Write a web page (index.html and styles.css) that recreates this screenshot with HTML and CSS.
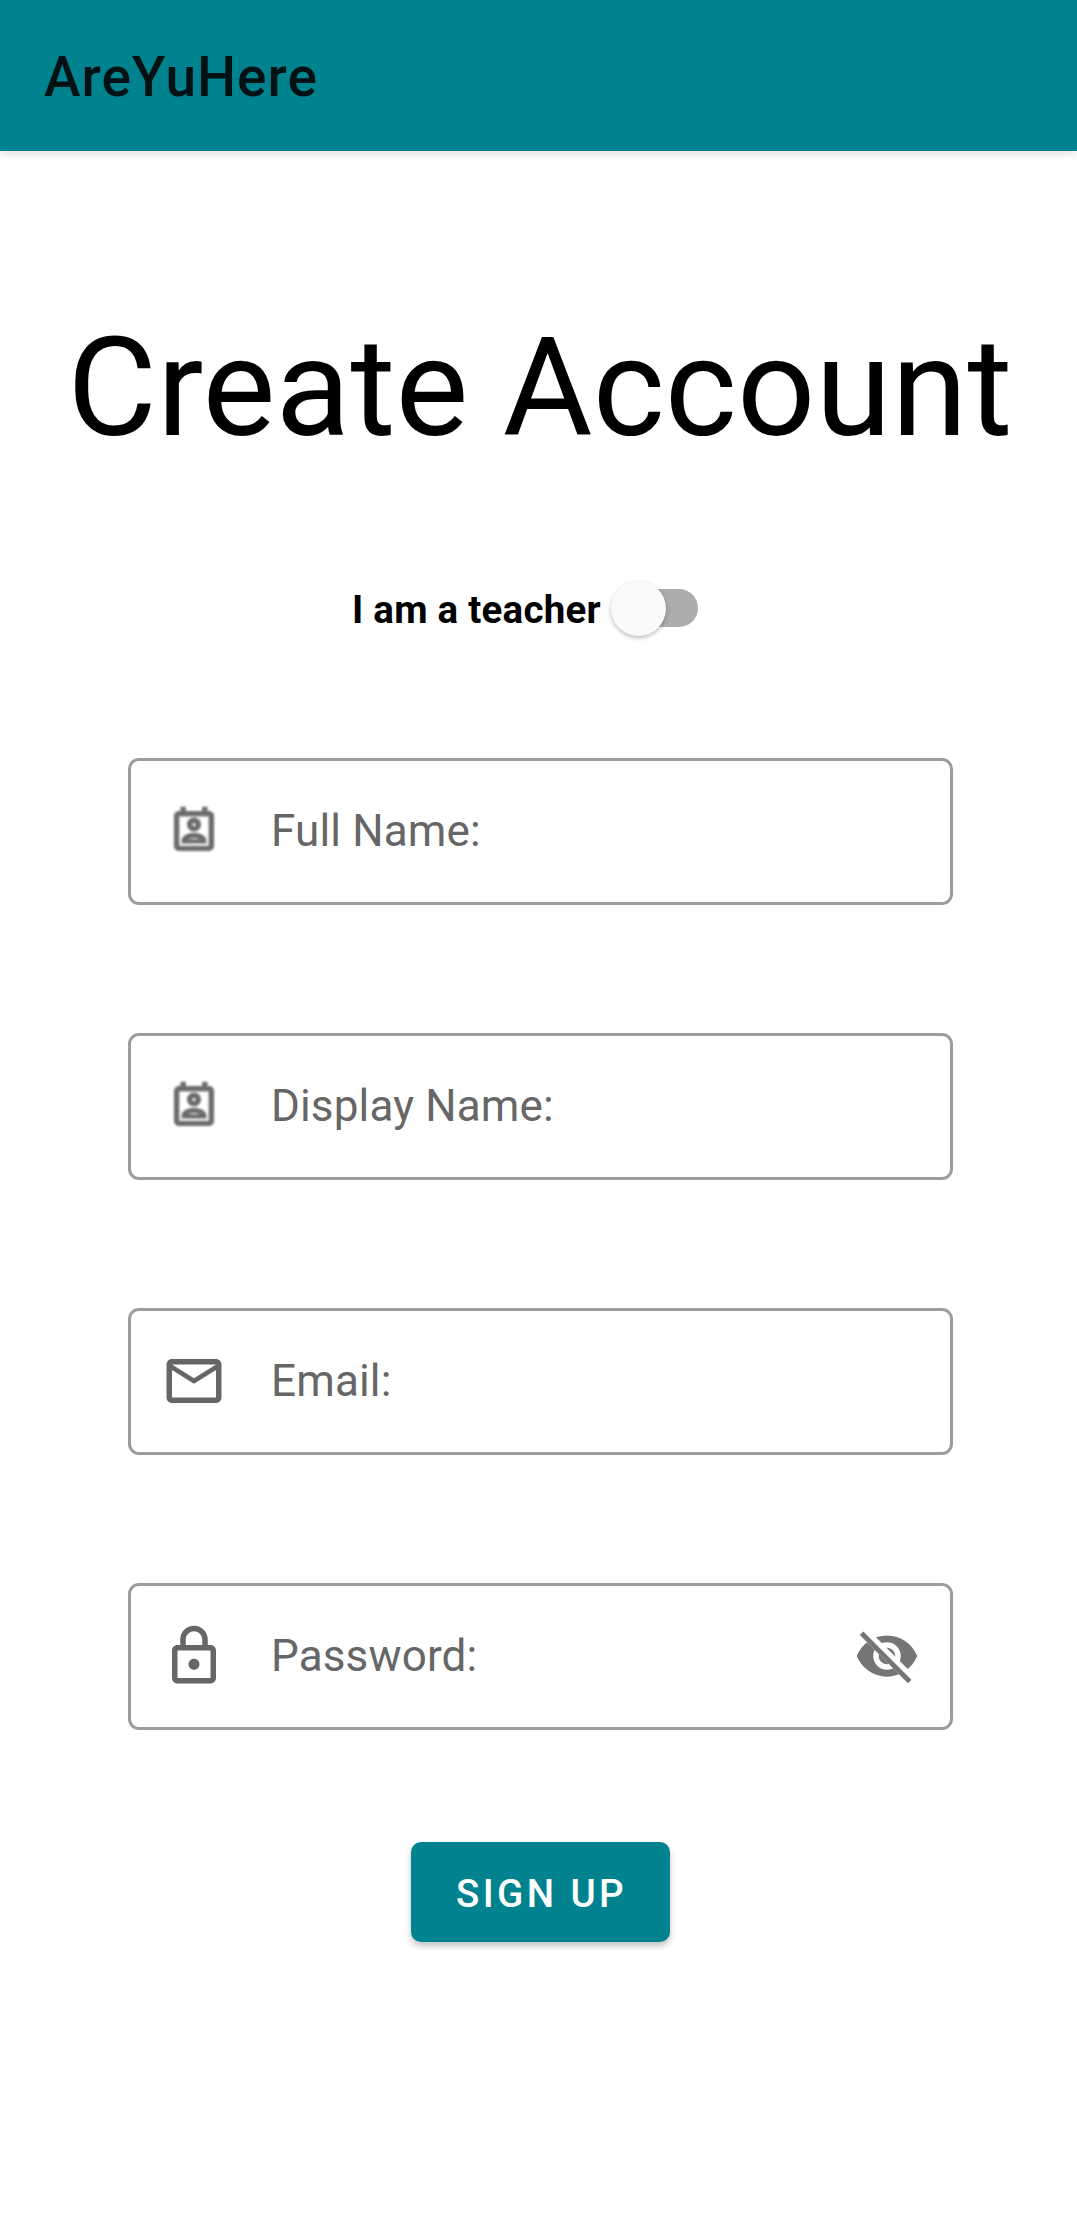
FILE: index.html
```html
<!DOCTYPE html>
<html lang="en">
<head>
<meta charset="utf-8">
<title>AreYuHere</title>
<link rel="stylesheet" href="styles.css">
</head>
<body>
<header class="app-bar"><span class="app-name">AreYuHere</span></header>
<main class="signup">
  <h1 class="title">Create Account</h1>
  <div class="teacher">
    <span class="teacher-label">I am a teacher</span>
    <span class="switch"><span class="thumb"></span></span>
  </div>
  <form class="fields">
    <label class="field">
      <svg class="icon icon-contact" viewBox="0 0 24 24"><path d="M19 3h-1V1h-2v2H8V1H6v2H5a2 2 0 0 0-2 2v14c0 1.1.89 2 2 2h14c1.1 0 2-.9 2-2V5a2 2 0 0 0-2-2zm0 16H5V5h14v14zM12 12c1.65 0 3-1.35 3-3s-1.35-3-3-3-3 1.35-3 3 1.35 3 3 3zm0-4c.55 0 1 .45 1 1s-.45 1-1 1-1-.45-1-1 .45-1 1-1zm5.5 8.58c0-2.5-3.5-3.58-5.5-3.58s-5.5 1.08-5.5 3.58V17.5h11v-.92zM8.48 16c.74-.51 2.23-1 3.52-1s2.78.49 3.52 1H8.48z"/></svg>
      <span class="hint">Full Name:</span>
    </label>
    <label class="field">
      <svg class="icon icon-contact" viewBox="0 0 24 24"><path d="M19 3h-1V1h-2v2H8V1H6v2H5a2 2 0 0 0-2 2v14c0 1.1.89 2 2 2h14c1.1 0 2-.9 2-2V5a2 2 0 0 0-2-2zm0 16H5V5h14v14zM12 12c1.65 0 3-1.35 3-3s-1.35-3-3-3-3 1.35-3 3 1.35 3 3 3zm0-4c.55 0 1 .45 1 1s-.45 1-1 1-1-.45-1-1 .45-1 1-1zm5.5 8.58c0-2.5-3.5-3.58-5.5-3.58s-5.5 1.08-5.5 3.58V17.5h11v-.92zM8.48 16c.74-.51 2.23-1 3.52-1s2.78.49 3.52 1H8.48z"/></svg>
      <span class="hint">Display Name:</span>
    </label>
    <label class="field">
      <svg class="icon" viewBox="0 0 24 24"><path d="M22 6c0-1.1-.9-2-2-2H4c-1.1 0-2 .9-2 2v12c0 1.1.9 2 2 2h16c1.1 0 2-.9 2-2V6zm-2 0l-8 5-8-5h16zm0 12H4V8l8 5 8-5v10z"/></svg>
      <span class="hint">Email:</span>
    </label>
    <label class="field">
      <svg class="icon" viewBox="0 0 24 24"><path d="M18 8h-1V6c0-2.76-2.24-5-5-5S7 3.24 7 6v2H6c-1.1 0-2 .9-2 2v10c0 1.1.9 2 2 2h12c1.1 0 2-.9 2-2V10c0-1.1-.9-2-2-2zM9 6c0-1.66 1.34-3 3-3s3 1.34 3 3v2H9V6zm9 14H6V10h12v10zm-6-3c1.1 0 2-.9 2-2s-.9-2-2-2-2 .9-2 2 .9 2 2 2z"/></svg>
      <span class="hint">Password:</span>
      <svg class="icon icon-eye" viewBox="0 0 24 24">
        <clipPath id="strike"><path d="M2 4.27L19.73 22l2.54-2.54L4.54 1.73V1H23v22H1V4.27z"/></clipPath>
        <path clip-path="url(#strike)" d="M12 4.5C7 4.5 2.73 7.61 1 12c1.73 4.39 6 7.5 11 7.5s9.27-3.11 11-7.5c-1.73-4.39-6-7.5-11-7.5zM12 17c-2.76 0-5-2.24-5-5s2.24-5 5-5 5 2.24 5 5-2.24 5-5 5zm0-8c-1.66 0-3 1.34-3 3s1.34 3 3 3 3-1.34 3-3-1.34-3-3-3z"/>
        <path class="slash" d="M2.75 3.75l17.5 17.5"/>
      </svg>
    </label>
    <button class="submit" type="button">SIGN UP</button>
  </form>
</main>
</body>
</html>
```
FILE: styles.css
```css
* {
  box-sizing: border-box;
}

body {
  margin: 0;
  min-height: 2240px;
  background: #fff;
  color: #000;
  font-family: Roboto, "Liberation Sans", sans-serif;
}

.app-bar {
  display: flex;
  align-items: center;
  height: 151px;
  padding: 3px 44px 0;
  background: #00838f;
  box-shadow: 0 3px 8px rgba(0, 0, 0, 0.12);
}

.app-name {
  font-size: 55px;
  font-weight: 500;
  letter-spacing: 1px;
  color: #021214;
}

.signup {
  display: flex;
  flex-direction: column;
  align-items: center;
}

.title {
  margin: 157px 0 0;
  padding-left: 3px;
  font-size: 137.5px;
  line-height: 161px;
  font-weight: 400;
  letter-spacing: 0.15px;
  white-space: nowrap;
}

.teacher {
  display: flex;
  align-items: center;
  gap: 10px;
  height: 58px;
  margin: 110px 0 0;
  padding-right: 27px;
}

.teacher-label {
  padding-top: 3px;
  font-size: 38.5px;
  font-weight: 700;
  letter-spacing: 0.25px;
  white-space: nowrap;
}

.switch {
  display: flex;
  align-items: center;
  width: 87px;
  height: 38px;
  border-radius: 19px;
  background: linear-gradient(to right, transparent 30px, #acacac 30px);
}

.thumb {
  width: 55px;
  height: 55px;
  border-radius: 50%;
  background: #fafafa;
  box-shadow: 0 2px 4px rgba(0, 0, 0, 0.26);
}

.fields {
  display: flex;
  flex-direction: column;
  align-items: center;
  gap: 128px;
  width: 825px;
  margin: 121px 0 0 4px;
}

.field {
  display: flex;
  align-items: center;
  width: 100%;
  height: 147px;
  padding: 0 30px 2px;
  border: 3px solid #9c9c9c;
  border-radius: 11px;
}

.icon {
  flex: none;
  width: 66px;
  height: 66px;
  fill: #666;
}

.icon-contact {
  width: 52px;
  height: 52px;
  margin: 1px 7px 0;
  fill: #6c6c6c;
  stroke: #6c6c6c;
  stroke-width: 0.5;
  filter: blur(0.9px);
}

.icon-eye {
  margin-left: auto;
  fill: #757575;
}

.slash {
  fill: none;
  stroke: #757575;
  stroke-width: 1.8;
}

.hint {
  margin-left: 44px;
  font-size: 44px;
  letter-spacing: 0.15px;
  color: #666;
}

.submit {
  width: 259px;
  height: 100px;
  margin-top: -16px;
  padding: 3px 0 0 2px;
  border: 0;
  border-radius: 10px;
  background: #00838f;
  box-shadow: 0 4px 6px rgba(0, 0, 0, 0.24);
  color: #fff;
  font: 500 38.5px Roboto, "Liberation Sans", sans-serif;
  letter-spacing: 3.44px;
}
```
